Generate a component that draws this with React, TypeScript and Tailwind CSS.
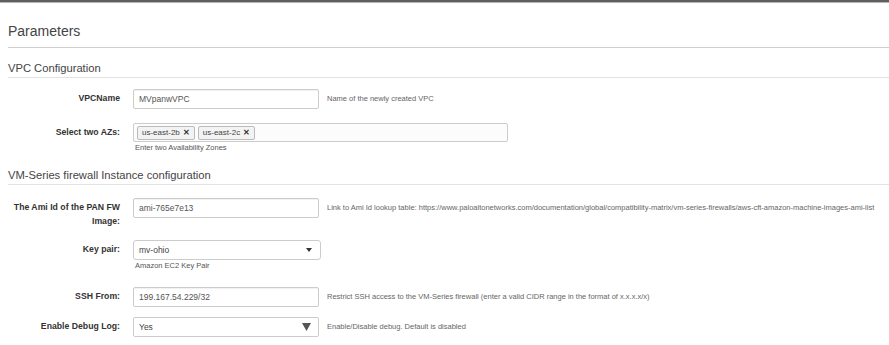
import React from "react";

function Row({
  label,
  children,
  help,
  below,
  className = "",
}: {
  label: React.ReactNode;
  children: React.ReactNode;
  help?: string;
  below?: string;
  className?: string;
}) {
  return (
    <div className={`flex items-start ${className}`}>
      <div className="w-[112px] shrink-0 pt-[2px] text-right text-[8.7px] font-bold leading-[15px] text-[#333]">
        {label}
      </div>
      <div className="ml-[13px] flex flex-col">
        <div className="flex items-center">
          {children}
          {help && (
            <span className="ml-[8px] whitespace-nowrap text-[7.5px] text-[#666]">{help}</span>
          )}
        </div>
        {below && <div className="mt-[1px] pl-[2px] text-[7.5px] leading-[10px] text-[#555]">{below}</div>}
      </div>
    </div>
  );
}

function TextBox({ value }: { value: string }) {
  return (
    <div className="flex h-[20px] w-[186px] items-center rounded-[2px] border border-[#ccc] bg-white px-[5px] text-[8.5px] text-[#555] shadow-[inset_0_1px_1px_rgba(0,0,0,0.06)]">
      {value}
    </div>
  );
}

function Tag({ text }: { text: string }) {
  return (
    <span className="mr-[3px] flex h-[14px] items-center rounded-[2px] border border-[#bbb] bg-[#f3f3f3] px-[4px] text-[8px] text-[#444]">
      {text}
      <span className="ml-[3px] text-[8px] font-bold text-[#333]">✕</span>
    </span>
  );
}

function Section({ title }: { title: string }) {
  return (
    <div className="border-b border-[#e3e3e3] pb-[2px] text-[11.2px] leading-[13px] text-[#444]">{title}</div>
  );
}

export default function App() {
  return (
    <div className="h-[345px] w-[889px] overflow-hidden bg-white" style={{ fontFamily: '"Liberation Sans", Arial, sans-serif' }}>
      <div className="h-[2px] bg-[#5f5f5f]" />
      <div className="h-px bg-[#b5b5b5]" />
      <div className="pl-2">
        <div className="mt-[20px] border-b border-[#cfcfcf] pb-[8px] text-[14px] leading-[16px] text-[#444]">
          Parameters
        </div>

        <div className="mt-[14px]">
          <Section title="VPC Configuration" />
        </div>

        <Row label="VPCName" help="Name of the newly created VPC" className="mt-[11px]">
          <TextBox value="MVpanwVPC" />
        </Row>

        <Row label="Select two AZs:" below="Enter two Availability Zones" className="mt-[14px]">
          <div className="flex h-[19px] w-[375px] items-center rounded-[2px] border border-[#ccc] bg-[#fcfcfc] px-[3px]">
            <Tag text="us-east-2b" />
            <Tag text="us-east-2c" />
          </div>
        </Row>

        <div className="mt-[16px]">
          <Section title="VM-Series firewall Instance configuration" />
        </div>

        <Row
          label={
            <span className="block leading-[14px]">
              The Ami Id of the PAN FW
              <br />
              Image:
            </span>
          }
          help="Link to Ami Id lookup table: https://www.paloaltonetworks.com/documentation/global/compatibility-matrix/vm-series-firewalls/aws-cft-amazon-machine-images-ami-list"
          className="mt-[13px]"
        >
          <TextBox value="ami-765e7e13" />
        </Row>

        <Row label="Key pair:" below="Amazon EC2 Key Pair" className="mt-[12px]">
          <div className="flex h-[20px] w-[188px] items-center justify-between rounded-[3px] border border-[#ccc] bg-white px-[5px] text-[8.5px] text-[#444]">
            <span>mv-ohio</span>
            <svg width="6" height="4" viewBox="0 0 6 4" className="mr-[3px]">
              <path d="M0 0 L6 0 L3 4 Z" fill="#333" />
            </svg>
          </div>
        </Row>

        <Row
          label="SSH From:"
          help="Restrict SSH access to the VM-Series firewall (enter a valid CIDR range in the format of x.x.x.x/x)"
          className="mt-[16px]"
        >
          <TextBox value="199.167.54.229/32" />
        </Row>

        <Row label="Enable Debug Log:" help="Enable/Disable debug. Default is disabled" className="mt-[10px]">
          <div className="flex h-[20px] w-[186px] items-center justify-between rounded-[2px] border border-[#ccc] bg-white px-[5px] text-[8.5px] text-[#444]">
            <span>Yes</span>
            <svg width="9" height="8" viewBox="0 0 9 8" className="mr-[2px]">
              <path d="M0 0 L9 0 L4.5 8 Z" fill="#555" />
            </svg>
          </div>
        </Row>
      </div>
    </div>
  );
}
